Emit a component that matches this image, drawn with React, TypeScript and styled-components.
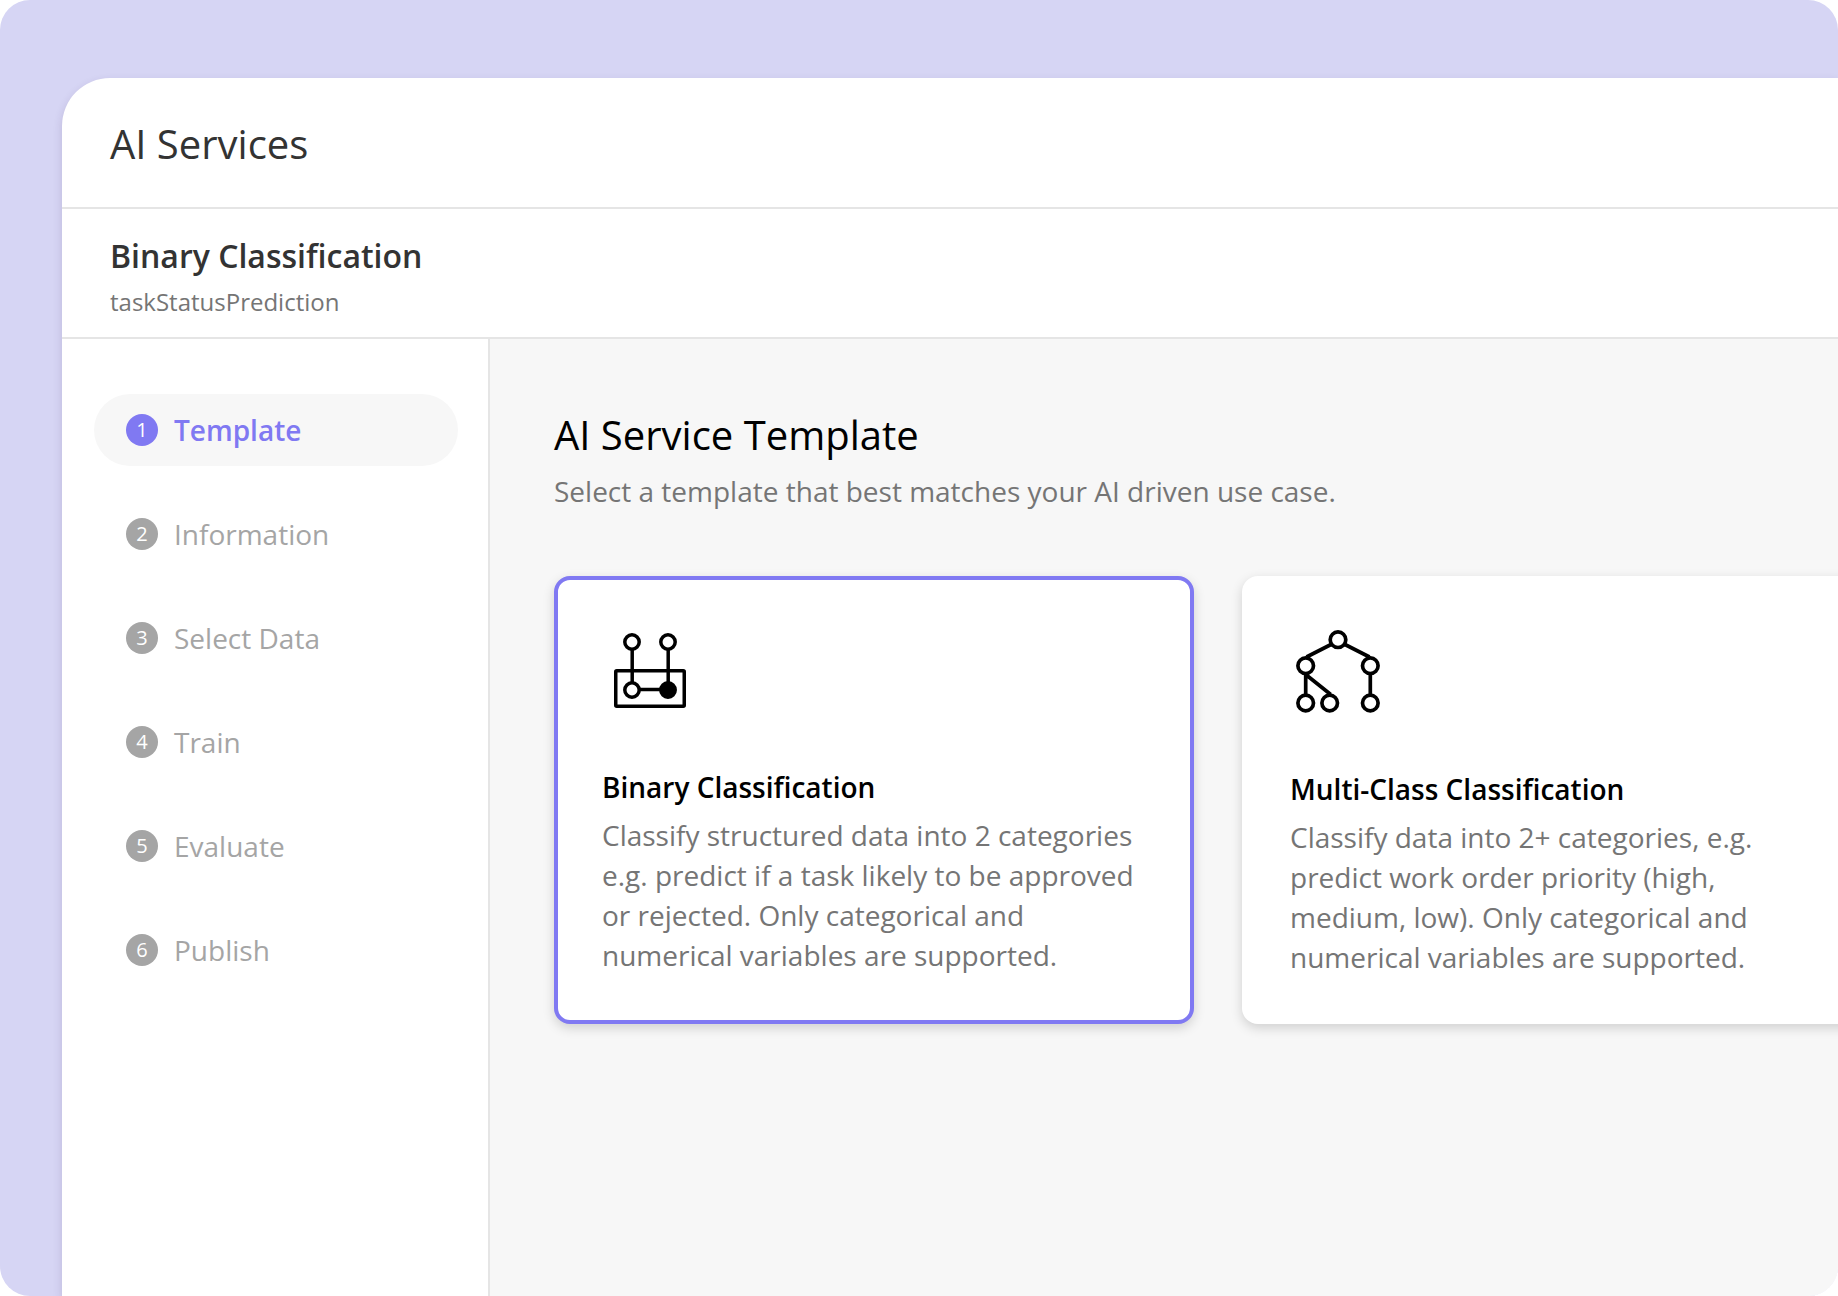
import React, { useState } from "react";
import styled, { createGlobalStyle, css } from "styled-components";

const color = {
  accent: "#8079f2",
  backdrop: "#d6d5f4",
  surface: "#ffffff",
  canvas: "#f7f7f7",
  line: "#e5e5e5",
  ink: "#333333",
  muted: "#757575",
  disabled: "#a5a5a5",
};

const GlobalStyle = createGlobalStyle`
  *, *::before, *::after { box-sizing: border-box; }
  body {
    margin: 0;
    background: #ffffff;
    font-family: "Open Sans", "Noto Sans", sans-serif;
  }
  h1, h2, p, ol { margin: 0; padding: 0; }
`;

const Backdrop = styled.div`
  display: flex;
  min-height: 100vh;
  padding: 78px 0 0 62px;
  border-radius: 30px;
  background: ${color.backdrop};
  overflow: hidden;
`;

const Panel = styled.div`
  display: flex;
  flex: 1;
  flex-direction: column;
  min-width: 0;
  border-top-left-radius: 48px;
  background: ${color.surface};
  box-shadow: 0 4px 10px rgba(60, 30, 90, 0.16);
  overflow: hidden;
`;

const TopBar = styled.header`
  padding: 38px 48px 35px;
  border-bottom: 2px solid ${color.line};
`;

const Title = styled.h1<{ $color: string }>`
  font-size: 40px;
  font-weight: 400;
  line-height: 56px;
  color: ${(p) => p.$color};
`;

const ServiceBar = styled.section`
  display: flex;
  flex-direction: column;
  gap: 8px;
  padding: 25px 48px 19px;
  border-bottom: 2px solid ${color.line};
`;

const ServiceName = styled.h2`
  font-size: 32px;
  font-weight: 600;
  line-height: 44px;
  color: ${color.ink};
`;

const ServiceId = styled.p`
  font-size: 24px;
  line-height: 32px;
  color: ${color.muted};
`;

const Body = styled.div`
  display: flex;
  flex: 1;
  min-height: 0;
`;

const Sidebar = styled.nav`
  flex: none;
  width: 428px;
  padding: 55px 30px 55px 32px;
  border-right: 2px solid ${color.line};
`;

const StepList = styled.ol`
  display: flex;
  flex-direction: column;
  gap: 32px;
  list-style: none;
`;

const StepNumber = styled.span<{ $active: boolean }>`
  display: flex;
  align-items: center;
  justify-content: center;
  width: 32px;
  height: 32px;
  border-radius: 50%;
  background: ${(p) => (p.$active ? color.accent : color.disabled)};
  color: #ffffff;
  font-size: 20px;
  font-weight: 400;
  line-height: 32px;
`;

const StepLink = styled.a<{ $active: boolean }>`
  display: flex;
  align-items: center;
  gap: 16px;
  height: 72px;
  padding: 0 32px;
  border-radius: 36px;
  background: ${(p) => (p.$active ? color.canvas : "transparent")};
  color: ${(p) => (p.$active ? color.accent : color.disabled)};
  font-size: 28px;
  font-weight: ${(p) => (p.$active ? 600 : 400)};
  line-height: 40px;
  text-decoration: none;
`;

const Main = styled.main`
  flex: 1;
  min-width: 0;
  padding: 68px 0 64px 64px;
  background: ${color.canvas};
  overflow: hidden;
`;

const Intro = styled.div`
  display: flex;
  flex-direction: column;
  gap: 8px;
  margin-bottom: 65px;
`;

const Lead = styled.p`
  font-size: 28px;
  line-height: 40px;
  color: ${color.muted};
`;

const CardRow = styled.div`
  display: flex;
  align-items: stretch;
  gap: 48px;
`;

const Card = styled.button<{ $selected: boolean }>`
  display: flex;
  flex: none;
  flex-direction: column;
  align-items: flex-start;
  width: 640px;
  padding: 48px 48px 47px;
  border: 0;
  border-radius: 16px;
  background: ${color.surface};
  box-shadow: 0 4px 12px rgba(0, 0, 0, 0.16);
  font-family: inherit;
  font-size: 28px;
  line-height: 40px;
  text-align: left;
  cursor: pointer;
  ${(p) =>
    p.$selected &&
    css`
      padding: 42px 44px 45px;
      border: 4px solid ${color.accent};
    `}
`;

const CardIcon = styled.svg`
  width: 96px;
  height: 96px;
  margin-bottom: 49px;
  fill: none;
  stroke: #000000;
`;

const CardName = styled.span`
  margin-bottom: 8px;
  font-weight: 600;
  color: #000000;
`;

const CardText = styled.span`
  color: ${color.muted};
`;

function BinaryIcon() {
  return (
    <CardIcon viewBox="0 0 96 96" strokeWidth="3.5" aria-hidden="true">
      <rect x="13.75" y="48.75" width="68.5" height="35.5" rx="1" />
      <path d="M30.2 27v34M66.2 27v34M37 67.6h22" />
      <circle cx="30" cy="20" r="7.2" />
      <circle cx="66" cy="20" r="7.2" />
      <circle cx="30" cy="68" r="7.2" />
      <circle cx="66" cy="68" r="7.2" fill="#000000" />
    </CardIcon>
  );
}

function TreeIcon() {
  return (
    <CardIcon viewBox="0 0 96 96" strokeWidth="3.7" aria-hidden="true">
      <path d="M42 20 16.5 33M54 20l25.5 13M15.7 49v23M15.7 50.5l25 20M80.3 49v23" />
      <circle cx="48" cy="15.7" r="7.8" />
      <circle cx="15.7" cy="41.7" r="7.8" />
      <circle cx="80.3" cy="41.7" r="7.8" />
      <circle cx="15.7" cy="79" r="7.8" />
      <circle cx="39.7" cy="79" r="7.8" />
      <circle cx="80.3" cy="79" r="7.8" />
    </CardIcon>
  );
}

const steps = ["Template", "Information", "Select Data", "Train", "Evaluate", "Publish"];

const templates = [
  {
    name: "Binary Classification",
    text: "Classify structured data into 2 categories e.g. predict if a task likely to be approved or rejected. Only categorical and numerical variables are supported.",
    Icon: BinaryIcon,
  },
  {
    name: "Multi-Class Classification",
    text: "Classify data into 2+ categories, e.g. predict work order priority (high, medium, low). Only categorical and numerical variables are supported.",
    Icon: TreeIcon,
  },
];

export default function App() {
  const [step, setStep] = useState(0);
  const [selected, setSelected] = useState(0);

  return (
    <>
      <GlobalStyle />
      <Backdrop>
        <Panel>
          <TopBar>
            <Title $color={color.ink}>AI Services</Title>
          </TopBar>
          <ServiceBar>
            <ServiceName>Binary Classification</ServiceName>
            <ServiceId>taskStatusPrediction</ServiceId>
          </ServiceBar>
          <Body>
            <Sidebar aria-label="Setup steps">
              <StepList>
                {steps.map((label, i) => (
                  <li key={label}>
                    <StepLink
                      href={`#step-${i + 1}`}
                      $active={i === step}
                      aria-current={i === step ? "step" : undefined}
                      onClick={() => setStep(i)}
                    >
                      <StepNumber $active={i === step}>{i + 1}</StepNumber>
                      {label}
                    </StepLink>
                  </li>
                ))}
              </StepList>
            </Sidebar>
            <Main>
              <Intro>
                <Title as="h2" $color="#000000">
                  AI Service Template
                </Title>
                <Lead>Select a template that best matches your AI driven use case.</Lead>
              </Intro>
              <CardRow>
                {templates.map(({ name, text, Icon }, i) => (
                  <Card
                    key={name}
                    type="button"
                    $selected={i === selected}
                    aria-pressed={i === selected}
                    onClick={() => setSelected(i)}
                  >
                    <Icon />
                    <CardName>{name}</CardName>
                    <CardText>{text}</CardText>
                  </Card>
                ))}
              </CardRow>
            </Main>
          </Body>
        </Panel>
      </Backdrop>
    </>
  );
}
